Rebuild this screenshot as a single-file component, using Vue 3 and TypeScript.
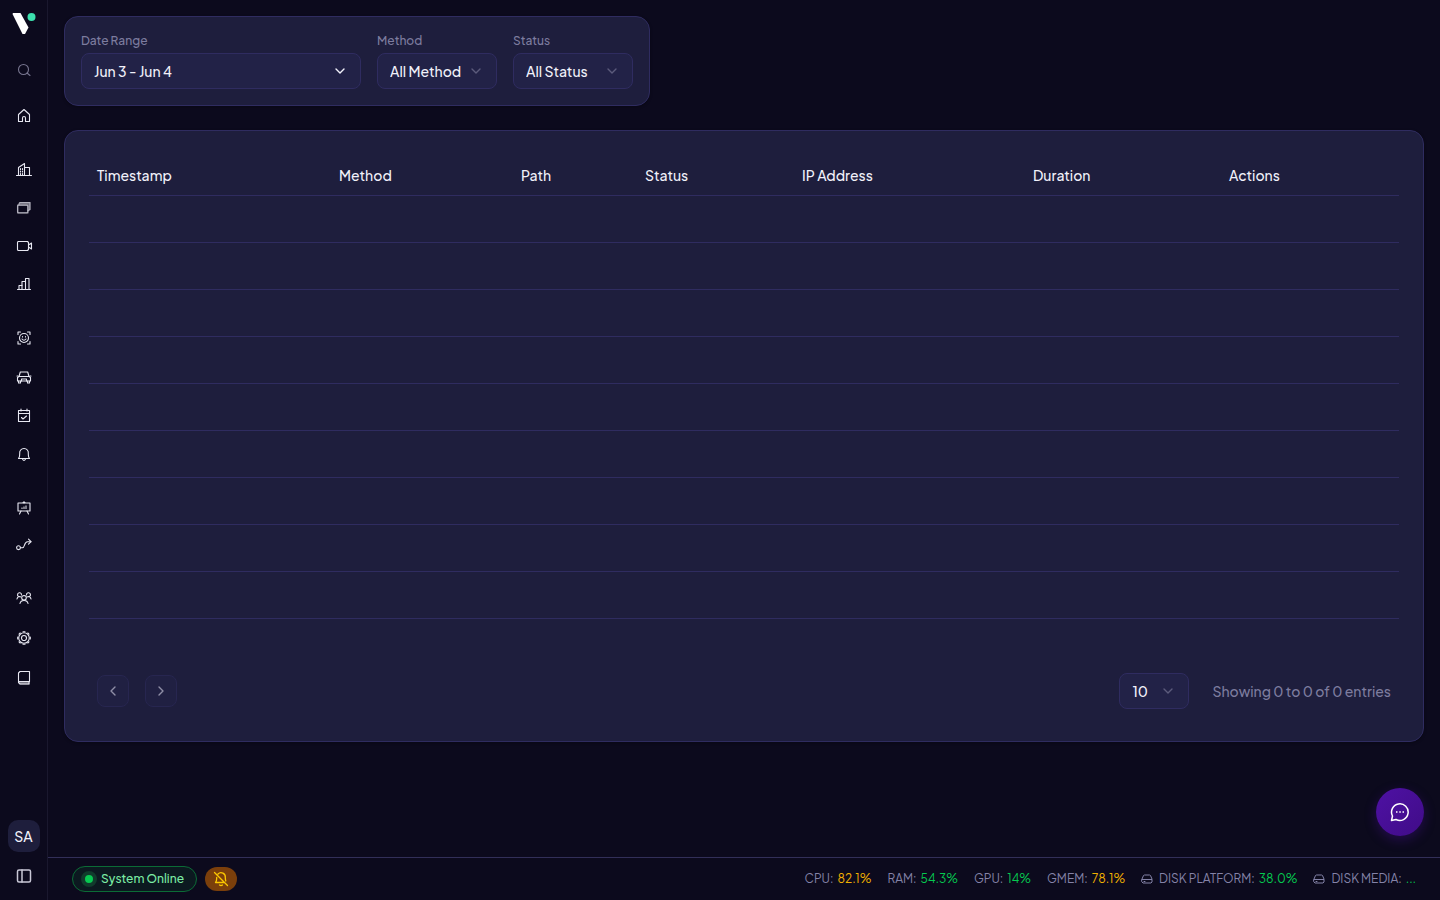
<script setup lang="ts">
import { ref } from 'vue'

interface NavItem { label: string; shapes: string[]; fill?: string[] }
interface Stat { label: string; value: string; level: 'ok' | 'warn'; disk?: boolean }

const home: NavItem = {
  label: 'Home',
  shapes: ['M2.5 6.5 8 1.5l5.5 5v7h-4V10a1.5 1.5 0 0 0-3 0v3.5h-4z'],
}

const groups: NavItem[][] = [
  [
    {
      label: 'Sites',
      shapes: ['M.5 13.5h15', 'M2.5 13.5v-8l6-4v12', 'M8.5 5.5h5v8', 'M4.500 6.500v1m0 1.500v1m0 1.500v1', 'M6.500 6.500v1m0 1.500v1m0 1.500v1'],
    },
    {
      label: 'Areas',
      shapes: ['M2.500 5h8.500l1 1v6l-1 1H2.500l-1-1V6z', 'M3 4.500V3.500l1-1h10v7l-2 1'],
      fill: ['M1 4.500h11.500V13.500H1zM2.500 6v6h8.500V6z', 'M2.500 4.500l1-2.500h11v8l-2 1V4.500z'],
    },
    { label: 'Cameras', shapes: ['M2 3.500h9.500l1 1v7l-1 1H2l-.5-1v-7z', 'M12.500 7l3-2v6l-3-2'] },
    { label: 'Analytics', shapes: ['M1.500 13.500h13', 'M3 13.500v-4h3v4', 'M6 9.500v-4h3.500v8', 'M9.500 5.500v-3h3.500v11'] },
  ],
  [
    {
      label: 'Faces',
      shapes: ['M2 4.500V2h2.500M11.500 2H14v2.500M14 11.500V14h-2.500M4.500 14H2v-2.500', 'M8 3.500a4.500 4.500 0 1 0 0 9a4.500 4.500 0 0 0 0-9z', 'M6 9q2 2.500 4 0', 'M6.500 6.500v.5M9.500 6.500v.5'],
    },
    {
      label: 'Vehicles',
      shapes: ['M3 7.500l1.300-4.500h7.400L13 7.500', 'M3 7.500h10l1.500 1v3.500h-13v-3.500z', 'M2.500 12v2h2v-2M11.500 12v2h2v-2', 'M5.500 12v-2h5v2', 'M1 7h1M14 7h1'],
    },
    { label: 'Attendance', shapes: ['M2.500 2.500h11v11h-11z', 'M2.500 5.500h11', 'M5 1v2M11 1v2', 'M5.500 9.500l1.500 1.500 3.500-3'] },
    { label: 'Alerts', shapes: ['M2.500 11.500c1.500-1.500 1-3 1.200-5A4.300 4.300 0 0 1 8 1.500a4.300 4.300 0 0 1 4.300 5c.2 2-.3 3.500 1.200 5z', 'M6.500 12q1.500 3 3 0'] },
  ],
  [
    {
      label: 'Reports',
      shapes: ['M2 3h12v8H2z', 'M7 2.500h2M8 1.500V3', 'M5 11l-1.500 3M11 11l1.500 3'],
      fill: ['M5 7.500h2v-1h2v-1h2v3.500H5z'],
    },
    { label: 'Workflows', shapes: ['M2.500 7.800a1.900 1.900 0 1 0 0 3.800a1.900 1.900 0 0 0 0-3.800z', 'M4.500 9.700h2c2.500 0 1.500-6 5-6H15', 'M12.500 1.200 15 3.700l-2.500 2.500'] },
  ],
  [
    {
      label: 'Users',
      shapes: ['M8 5.500a2.300 2.300 0 1 0 0 4.600a2.300 2.300 0 0 0 0-4.600z', 'M4 13.500q.500-3 4-3t4 3', 'M5.500 5a2 2 0 1 0-3 1.500M10.500 5a2 2 0 1 1 3 1.500', 'M1 9q.500-2.500 2.500-2.500l1.500.500M15 9q-.500-2.500-2.500-2.500L11 7'],
    },
    {
      label: 'Settings',
      shapes: [
        'M8 2.700a5.300 5.300 0 1 0 0 10.600a5.300 5.300 0 0 0 0-10.600z',
        'M7 1.700h2M7 14.300h2M1.700 7v2M14.300 7v2M3 4.200l1.200-1.200M11.800 3l1.200 1.200M3 11.800l1.200 1.200M11.800 13l1.200-1.200',
        'M8 5.500a2.500 2.500 0 1 0 0 5a2.500 2.500 0 0 0 0-5z',
      ],
    },
    {
      label: 'Documentation',
      shapes: ['M13.500 11.500V1.500h-9.500l-1.500 1.500v9.500l1.500 1.500h9v-2', 'M3 11.500h10.500'],
      fill: ['M2.500 11.500H13.500V14.500H4z'],
    },
  ],
]

const columns = [
  { title: 'Timestamp', key: 'timestamp' },
  { title: 'Method', key: 'method' },
  { title: 'Path', key: 'path' },
  { title: 'Status', key: 'status' },
  { title: 'IP Address', key: 'address' },
  { title: 'Duration', key: 'duration' },
  { title: 'Actions', key: 'actions' },
]

const stats: Stat[] = [
  { label: 'CPU:', value: '82.1%', level: 'warn' },
  { label: 'RAM:', value: '54.3%', level: 'ok' },
  { label: 'GPU:', value: '14%', level: 'ok' },
  { label: 'GMEM:', value: '78.1%', level: 'warn' },
  { label: 'DISK PLATFORM:', value: '38.0%', level: 'ok', disk: true },
  { label: 'DISK MEDIA:', value: '...', level: 'ok', disk: true },
]

const method = ref('All Method')
const status = ref('All Status')
const pageSize = ref('10')
</script>

<template>
  <div class="shell">
    <aside class="sidebar">
      <a class="logo" href="#" aria-label="Dashboard">
        <svg width="24" height="24" viewBox="0 0 24 24">
          <path d="M1 1h7.500l8 14.500-3.500 6.500h-2.500L.500 2z" fill="#fff" />
          <circle cx="19.500" cy="5" r="4" fill="#3ce0ae" />
        </svg>
      </a>
      <button class="nav-item search" type="button" aria-label="Search">
        <svg class="icon" viewBox="0 0 16 16"><circle cx="7.500" cy="7.500" r="5" /><path d="M11 11l3 2.500" /></svg>
      </button>
      <nav>
        <a class="nav-item" href="#" :aria-label="home.label">
          <svg class="icon" viewBox="0 0 16 16"><path v-for="d in home.shapes" :key="d" :d="d" /></svg>
        </a>
        <div v-for="(group, i) in groups" :key="i" class="group">
          <a v-for="item in group" :key="item.label" class="nav-item" href="#" :aria-label="item.label">
            <svg class="icon" viewBox="0 0 16 16">
              <path v-for="d in item.fill" :key="d" :d="d" class="solid" />
              <path v-for="d in item.shapes" :key="d" :d="d" :class="{ soft: item.label === 'Areas' }" />
            </svg>
          </a>
        </div>
      </nav>
      <div class="bottom">
        <button class="avatar" type="button">SA</button>
        <button class="nav-item" type="button" aria-label="Toggle sidebar">
          <svg class="icon panel" viewBox="0 0 16 16"><rect x="1.500" y="2" width="13" height="12" rx="1.500" /><path d="M6 2v12" /></svg>
        </button>
      </div>
    </aside>

    <div class="page">
      <main>
        <section class="card filters">
          <div class="field range">
            <label for="range">Date Range</label>
            <button id="range" class="control" type="button">
              Jun 3 - Jun 4
              <svg class="chevron bright" viewBox="0 0 16 16"><path d="M4 6l4 4 4-4" /></svg>
            </button>
          </div>
          <div class="field">
            <label for="method">Method</label>
            <div class="select">
              <select id="method" v-model="method" class="control"><option>All Method</option></select>
              <svg class="chevron" viewBox="0 0 16 16"><path d="M4 6l4 4 4-4" /></svg>
            </div>
          </div>
          <div class="field">
            <label for="status">Status</label>
            <div class="select">
              <select id="status" v-model="status" class="control"><option>All Status</option></select>
              <svg class="chevron" viewBox="0 0 16 16"><path d="M4 6l4 4 4-4" /></svg>
            </div>
          </div>
        </section>

        <section class="card log">
          <table>
            <colgroup><col v-for="c in columns" :key="c.key" :class="c.key" /></colgroup>
            <thead>
              <tr><th v-for="c in columns" :key="c.key" scope="col">{{ c.title }}</th></tr>
            </thead>
            <tbody>
              <tr v-for="r in 10" :key="r"><td v-for="c in columns" :key="c.key"></td></tr>
            </tbody>
          </table>
          <div class="pagination">
            <button class="pager" type="button" disabled aria-label="Previous page">
              <svg viewBox="0 0 16 16"><path d="M10 4L6 8l4 4" /></svg>
            </button>
            <button class="pager" type="button" disabled aria-label="Next page">
              <svg viewBox="0 0 16 16"><path d="M6 4l4 4-4 4" /></svg>
            </button>
            <div class="select size">
              <select v-model="pageSize" class="control" aria-label="Rows per page"><option>10</option></select>
              <svg class="chevron" viewBox="0 0 16 16"><path d="M4 6l4 4 4-4" /></svg>
            </div>
            <span class="summary">Showing 0 to 0 of 0 entries</span>
          </div>
        </section>
      </main>

      <footer>
        <div class="online"><span class="dot"></span>System Online</div>
        <button class="muted-bell" type="button" aria-label="Alerts muted">
          <svg viewBox="0 0 16 16">
            <path d="M2.500 11.500c1.500-1.500 1-3 1.200-5M5 3A4.300 4.300 0 0 1 12.300 6.500q0 2 .5 3.500M2.500 11.500h9M6.500 14q1.500 1 3 0M1.500 1.500l13 13" />
          </svg>
        </button>
        <div class="stats">
          <span v-for="s in stats" :key="s.label" class="stat">
            <svg v-if="s.disk" class="disk" viewBox="0 0 12 12"><path d="M1 6l1.500-3.500 1-.5h5l1 .5L11 6M1 6.500h10v2.500l-1 1H2L1 9zM3 8.500h1" /></svg>
            <span>{{ s.label }}</span>
            <span :class="s.level">{{ s.value }}</span>
          </span>
        </div>
      </footer>
    </div>

    <button class="chat" type="button" aria-label="Open chat">
      <svg viewBox="0 0 20 20">
        <path d="M1.500 18.500l1-4.500a8.300 8.300 0 1 1 3.500 3.500z" />
        <path d="M6 10h1.500M9.300 10h1.500M12.500 10h1.500" class="dots" />
      </svg>
    </button>
  </div>
</template>

<style>
body {
  margin: 0;
  background: #0c0a1d;
}
</style>

<style scoped>
.shell {
  display: flex;
  min-height: 100vh;
  color: #f1f1fa;
  background: #0c0a1d;
  font: 500 14px/20px "Plus Jakarta Sans", Inter, "Liberation Sans", sans-serif;
}
*, *::before, *::after { box-sizing: border-box; }
button, select {
  margin: 0;
  padding: 0;
  border: 0;
  background: none;
  color: inherit;
  font: inherit;
}
svg {
  display: block;
  flex: none;
  fill: none;
  stroke: currentColor;
  stroke-linecap: round;
  stroke-linejoin: round;
}
.sidebar {
  position: sticky;
  top: 0;
  display: flex;
  flex-direction: column;
  align-items: center;
  flex: none;
  width: 48px;
  height: 100vh;
  padding: 12px 0 8px;
  border-right: 1px solid #1a182e;
}
.logo svg { stroke: none; }
.nav-item {
  display: flex;
  align-items: center;
  justify-content: center;
  width: 32px;
  height: 32px;
  color: #e8e8f2;
}
.icon { width: 16px; height: 16px; overflow: visible; stroke-width: 1.1; }
.solid { fill: currentColor; fill-rule: evenodd; stroke: none; opacity: 0.5; }
.soft { opacity: 0.5; }
.search { margin: 18px 0 14px; color: #77758f; }
.group {
  display: flex;
  flex-direction: column;
  gap: 6px;
  margin-top: 22px;
}
.group:nth-of-type(2) { gap: 7px; }
.group:nth-of-type(3) { margin-top: 21px; }
.group:nth-of-type(4) { gap: 8px; margin-top: 20px; }
.bottom {
  display: flex;
  flex-direction: column;
  gap: 8px;
  margin-top: auto;
}
.avatar {
  width: 32px;
  height: 32px;
  border-radius: 10px;
  background: #1e1e3c;
}
.panel { color: #c9c8d6; stroke-width: 1.5; }
.page {
  display: flex;
  flex: 1;
  flex-direction: column;
  min-width: 0;
}
main {
  display: flex;
  flex: 1;
  flex-direction: column;
  align-items: flex-start;
  gap: 24px;
  padding: 16px;
}
.card {
  border: 1px solid #2f2c60;
  border-radius: 14px;
  background: #1e1e3d;
  box-shadow: 0 1px 3px rgba(0, 0, 0, 0.3);
}
.filters {
  display: flex;
  gap: 16px;
  padding: 16px;
}
.field {
  display: flex;
  flex-direction: column;
  gap: 4px;
  width: 120px;
}
.range { width: 280px; }
label {
  color: #7d7c9f;
  font-size: 12px;
  line-height: 16px;
}
.control {
  display: flex;
  align-items: center;
  justify-content: space-between;
  width: 100%;
  height: 36px;
  padding: 0 12px;
  border: 1px solid #2f2c60;
  border-radius: 8px;
  background: #222247;
  appearance: none;
}
.select {
  display: grid;
  align-items: center;
}
.select > * { grid-area: 1 / 1; }
.chevron {
  width: 16px;
  height: 16px;
  color: #5c5b7c;
  stroke-width: 1.4;
  pointer-events: none;
}
.select .chevron { justify-self: end; margin-right: 13px; }
.bright { color: #f1f1fa; }
.log { width: 100%; padding: 24px; }
table {
  width: 100%;
  table-layout: fixed;
  border-collapse: separate;
  border-spacing: 0;
}
.timestamp { width: 242px; }
.method { width: 182px; }
.path { width: 124px; }
.status { width: 157px; }
.address { width: 231px; }
.duration { width: 196px; }
.actions { width: 178px; }
th {
  height: 41px;
  padding: 0 8px;
  border-bottom: 1px solid #2f2c60;
  text-align: left;
  font-weight: 500;
}
td {
  height: 47px;
  padding: 0 8px;
  border-bottom: 1px solid #2f2c60;
}
tr:last-child td { height: 46px; border-bottom: 0; }
.pagination {
  display: flex;
  align-items: center;
  gap: 16px;
  padding: 8px;
}
.pager {
  display: flex;
  align-items: center;
  justify-content: center;
  width: 32px;
  height: 32px;
  border: 1px solid #272650;
  border-radius: 8px;
  background: #202042;
  color: #8f8ea6;
}
.pager svg { width: 16px; height: 16px; stroke-width: 1.4; }
.size { width: 70px; margin-left: auto; }
.summary { margin-left: 7px; color: #7d7c9f; }
footer {
  display: flex;
  align-items: center;
  gap: 8px;
  height: 43px;
  padding: 0 24px;
  border-top: 1px solid #322f58;
  font-size: 12px;
  line-height: 16px;
}
.online {
  display: flex;
  align-items: center;
  gap: 4px;
  height: 26px;
  padding: 0 12px 0 8px;
  border: 1px solid #0b6c36;
  border-radius: 13px;
  background: #0c1920;
  color: #7beba4;
  white-space: nowrap;
}
.dot {
  width: 16px;
  height: 16px;
  border: 4px solid #113b2c;
  border-radius: 50%;
  background: #08c951;
}
.muted-bell {
  display: flex;
  align-items: center;
  justify-content: center;
  width: 32px;
  height: 24px;
  border-radius: 12px;
  background: #7b3f0b;
  color: #fcc800;
}
.muted-bell svg { width: 16px; height: 16px; stroke-width: 1.3; }
.stats { display: flex; gap: 16px; margin-left: auto; white-space: nowrap; }
.stat {
  display: flex;
  align-items: center;
  gap: 4px;
  color: #8483a8;
  font-weight: 400;
}
.disk { width: 12px; height: 12px; margin-right: 2px; }
.ok { color: #05c950; }
.warn { color: #f0b100; }
.chat {
  position: fixed;
  right: 16px;
  bottom: 64px;
  display: flex;
  align-items: center;
  justify-content: center;
  width: 48px;
  height: 48px;
  border-radius: 50%;
  background: linear-gradient(135deg, #4e11a4, #400c87);
  box-shadow: 0 4px 12px rgba(78, 17, 164, 0.35);
  color: #fff;
}
.chat svg { width: 20px; height: 20px; stroke-width: 1.5; }
.dots { stroke-linecap: butt; }
</style>
